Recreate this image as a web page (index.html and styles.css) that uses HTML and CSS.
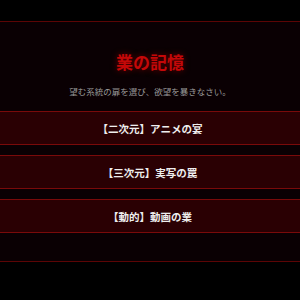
FILE: index.html
```html
<!DOCTYPE html>
<html lang="ja">

<head>
  <meta charset="UTF-8">
  <meta name="viewport" content="width=device-width, initial-scale=1.0">
  <title>業の記憶</title>
  <link rel="stylesheet" href="styles.css">
</head>

<body>
  <main class="gate">
    <h1 class="gate-title">業の記憶</h1>
    <p class="gate-lead">望む系統の扉を選び、欲望を暴きなさい。</p>

    <div class="door-list">
      <button class="door">【二次元】アニメの宴</button>
      <button class="door">【三次元】実写の罠</button>
      <button class="door">【動的】動画の業</button>
    </div>
  </main>
</body>

</html>
```

FILE: styles.css
```css
body {
  margin: 0;
  background-color: #000;
  font-family: "Liberation Serif", "Noto Sans CJK JP", serif;
}

.gate {
  margin-top: 21px;
  padding: 27px 0 28px;
  background-color: #0a0003;
  border-top: 1px solid #5c0505;
  border-bottom: 1px solid #5c0505;
  text-align: center;
}

.gate-title {
  margin: 0;
  font-size: 17px;
  font-weight: bold;
  color: #c40808;
  text-shadow: 0 0 6px rgba(200, 0, 0, 0.5);
}

.gate-lead {
  margin: 11px 0 14px;
  font-size: 8.5px;
  color: #999;
}

.door-list {
  display: flex;
  flex-direction: column;
  gap: 10px;
}

.door {
  display: block;
  width: 100%;
  height: 34px;
  background-color: #2a0003;
  color: #eee;
  border: none;
  border-top: 1px solid #7a0a0a;
  border-bottom: 1px solid #7a0a0a;
  font-family: "Noto Sans CJK JP", sans-serif;
  font-size: 10.5px;
  font-weight: bold;
  cursor: pointer;
}
```
